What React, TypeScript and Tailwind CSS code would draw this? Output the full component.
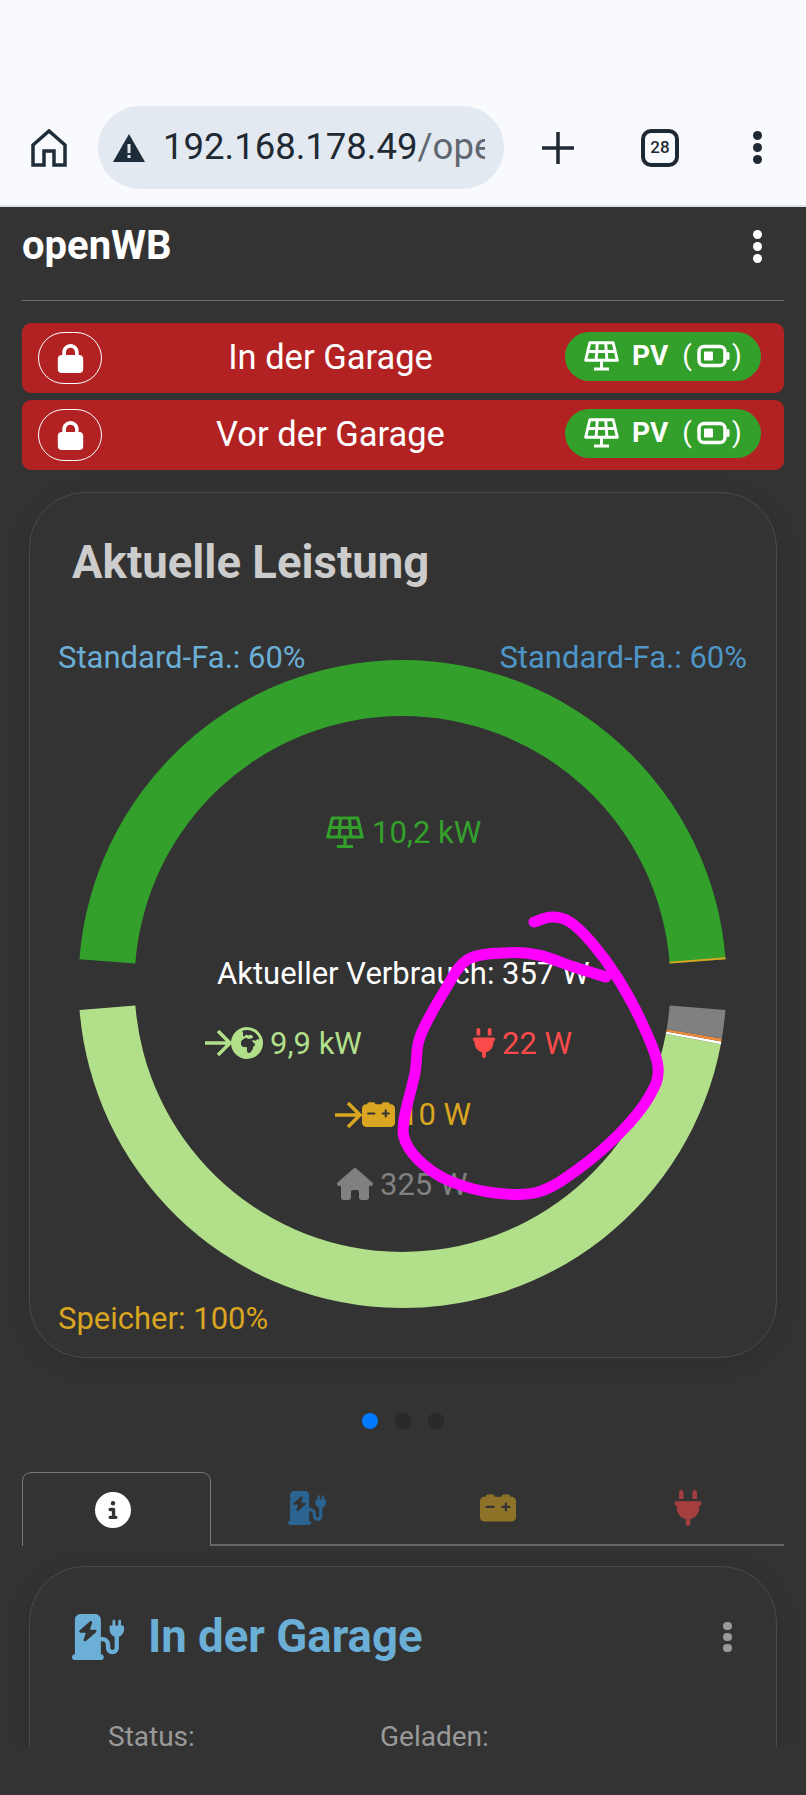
import React from "react";
import {
  FaCarBattery,
  FaChargingStation,
  FaCircleInfo,
  FaEarthAfrica,
  FaHouse,
  FaLock,
  FaPlug,
} from "react-icons/fa6";

const FONT = "font-['Roboto',sans-serif]";

function Kebab({ color = "bg-white", h = "h-[9px]", gap = "gap-[3px]" }: { color?: string; h?: string; gap?: string }) {
  return (
    <div className={`flex flex-col items-center ${gap}`}>
      <div className={`w-[9px] ${h} rounded-full ${color}`} />
      <div className={`w-[9px] ${h} rounded-full ${color}`} />
      <div className={`w-[9px] ${h} rounded-full ${color}`} />
    </div>
  );
}

function SolarPanel({ size = 36 }: { size?: number }) {
  return (
    <svg width={size} height={size * 0.86} viewBox="0 0 42 36" fill="none" stroke="currentColor" strokeWidth="3.500">
      <path d="M7 2H35L40 23H2Z" strokeLinejoin="round" />
      <path d="M4.500 12.500H37.500M16 2L14.500 23M26 2L27.500 23M21 23V33M12 33.500H30" />
    </svg>
  );
}

function BatteryOutline() {
  return (
    <svg width="33" height="24" viewBox="0 0 33 24" fill="none">
      <rect x="2" y="2.500" width="26" height="19" rx="5" stroke="currentColor" strokeWidth="3.500" />
      <rect x="7" y="7.500" width="9" height="9" rx="1" fill="currentColor" />
      <rect x="29.500" y="8" width="3" height="8" rx="1.500" fill="currentColor" />
    </svg>
  );
}

function ChargePointButton({ name }: { name: string }) {
  return (
    <div className="flex h-[70px] items-center rounded-[9px] bg-[#b22222] pl-4 pr-[23px] text-white">
      <div className="flex h-[52px] w-[64px] items-center justify-center rounded-full border border-white">
        <FaLock size={29} />
      </div>
      <div className="flex-1 pr-[6px] text-center text-[34.500px]">{name}</div>
      <div className="mb-[4px] flex h-[49px] w-[196px] items-center rounded-full bg-[#33a02c] pl-[19px] text-[28px] font-bold">
        <SolarPanel size={35} />
        <span className="ml-[13px]">PV</span>
        <span className="ml-[14px] font-normal">(</span>
        <span className="ml-[5px]"><BatteryOutline /></span>
        <span className="ml-[2px] font-normal">)</span>
      </div>
    </div>
  );
}

function polar(r: number, deg: number) {
  const a = (deg * Math.PI) / 180;
  return [401.500 + r * Math.cos(a), 984 - r * Math.sin(a)];
}

function arc(from: number, to: number, ro = 324, ri = 268) {
  const [x1, y1] = polar(ro, from);
  const [x2, y2] = polar(ro, to);
  const [x3, y3] = polar(ri, to);
  const [x4, y4] = polar(ri, from);
  const large = Math.abs(to - from) > 180 ? 1 : 0;
  const s1 = to > from ? 0 : 1;
  const s2 = to > from ? 1 : 0;
  return `M${x1} ${y1}A${ro} ${ro} 0 ${large} ${s1} ${x2} ${y2}L${x3} ${y3}A${ri} ${ri} 0 ${large} ${s2} ${x4} ${y4}Z`;
}

const scribble: [number, number][] = [
  [533, 922], [551, 917], [569, 922], [591, 943], [616, 977], [641, 1023], [657, 1067], [648, 1097],
  [619, 1133], [576, 1170], [537, 1192], [494, 1193], [451, 1182], [423, 1165], [405, 1143], [403, 1120],
  [414, 1073], [419, 1037], [444, 990], [466, 960], [501, 953], [537, 955], [573, 967], [605, 977],
];

function smooth(p: [number, number][]) {
  let d = `M${p[0][0]} ${p[0][1]}`;
  for (let i = 0; i < p.length - 1; i++) {
    const a = p[Math.max(i - 1, 0)];
    const b = p[i];
    const c = p[i + 1];
    const e = p[Math.min(i + 2, p.length - 1)];
    d += `C${b[0] + (c[0] - a[0]) / 6} ${b[1] + (c[1] - a[1]) / 6} ${c[0] - (e[0] - b[0]) / 6} ${c[1] - (e[1] - b[1]) / 6} ${c[0]} ${c[1]}`;
  }
  return d;
}

function Arrow({ x, y, color }: { x: number; y: number; color: string }) {
  return (
    <path
      d={`M${x} ${y}H${x + 24}M${x + 13} ${y - 12}L${x + 25} ${y}L${x + 13} ${y + 12}`}
      fill="none"
      stroke={color}
      strokeWidth="3.500"
    />
  );
}

function Chart() {
  return (
    <svg width="746" height="738" viewBox="29 620 746 738" className="block" fontFamily="Roboto, sans-serif" fontSize="31">
      <text x="57" y="668" fill="#6baed6">Standard-Fa.: 60%</text>
      <text x="746" y="668" fill="#4f96c8" textAnchor="end">Standard-Fa.: 60%</text>
      <text x="57" y="1329" fill="#daa520">Speicher: 100%</text>

      <path d={arc(175.6, 4.4)} fill="#33a02c" />
      <path d={arc(4.4, 4.75)} fill="#daa520" />
      <path d={arc(-175.4, -10.7)} fill="#b2df8a" />
      <path d={arc(-10.7, -10.2)} fill="#ffffff" />
      <path d={arc(-10.2, -9.7)} fill="#ee8a3a" />
      <path d={arc(-9.7, -4.6)} fill="#808080" />

      <svg x="325" y="816" width="38" height="33" viewBox="0 0 42 36" fill="none" stroke="#33a02c" strokeWidth="3.500">
        <path d="M7 2H35L40 23H2Z" strokeLinejoin="round" />
        <path d="M4.500 12.500H37.500M16 2L14.500 23M26 2L27.500 23M21 23V33M12 33.500H30" />
      </svg>
      <text x="371" y="843" fill="#33a02c">10,2 kW</text>

      <text x="216" y="984" fill="#ffffff">Aktueller Verbrauch: 357 W</text>

      <Arrow x={204} y={1043} color="#b2df8a" />
      <g className="text-[#b2df8a]"><FaEarthAfrica x={230} y={1027} size={32} /></g>
      <text x="269" y="1054" fill="#b2df8a">9,9 kW</text>

      <g className="text-[#fb4b4b]"><FaPlug x={468} y={1028} size={30} /></g>
      <text x="501" y="1054" fill="#fb4b4b">22 W</text>

      <Arrow x={334} y={1115} color="#daa520" />
      <g className="text-[#daa520]"><FaCarBattery x={361} y={1098} size={33} /></g>
      <text x="400" y="1125" fill="#daa520">10 W</text>

      <g className="text-[#808080]"><FaHouse x={336} y={1166} size={36} /></g>
      <text x="379" y="1195" fill="#808080">325 W</text>

      <path d={smooth(scribble)} fill="none" stroke="#ff00ff" strokeWidth="11" strokeLinecap="round" strokeLinejoin="round" />
    </svg>
  );
}

export default function App() {
  return (
    <div className={`h-[1795px] w-[806px] overflow-hidden bg-[#333333] ${FONT}`}>
      {/* browser toolbar */}
      <div className="flex h-[207px] items-end border-b-2 border-[#dfe3e8] bg-[#f8fafd] pb-[16px]">
        <div className="flex h-[83px] w-full items-center">
          <svg width="36" height="38" viewBox="0 0 36 38" fill="none" stroke="#1f2d3a" strokeWidth="3.500" className="ml-[31px]">
            <path d="M2 16L18 2L34 16V36H23V22H13V36H2Z" strokeLinejoin="miter" />
          </svg>
          <div className="ml-[31px] flex h-[83px] w-[406px] items-center overflow-hidden rounded-full bg-[#e3e9f1] pl-[14px]">
            <svg width="34" height="30" viewBox="0 0 34 30" className="shrink-0">
              <path d="M17 1L33 29H1Z" fill="#1f2d3a" />
              <rect x="15.500" y="11" width="3" height="9" fill="#e3e9f1" />
              <rect x="15.500" y="22" width="3" height="3" fill="#e3e9f1" />
            </svg>
            <div className="ml-[17px] w-[322px] overflow-hidden whitespace-nowrap text-[36.500px] text-[#1f2933]">
              192.168.178.49<span className="text-[#5f6770]">/openWB</span>
            </div>
          </div>
          <svg width="32" height="32" viewBox="0 0 32 32" stroke="#1f2933" strokeWidth="3.500" className="ml-[38px]">
            <path d="M16 0V32M0 16H32" />
          </svg>
          <div className="ml-[67px] flex h-[38px] w-[38px] items-center justify-center rounded-[10px] border-[4px] border-[#1f2933] text-[17px] font-medium text-[#1f2933]">
            28
          </div>
          <div className="ml-[74px]">
            <Kebab color="bg-[#1f2933]" />
          </div>
        </div>
      </div>

      {/* page, clipped by the browser's bottom bar */}
      <div className="h-[1540px] overflow-hidden px-[22px]">
        <div className="flex h-[94px] items-center justify-between border-b border-[#6a6a6a] pb-[15px]">
          <div className="text-[40px] font-bold text-white">openWB</div>
          <div className="mr-[22px]"><Kebab /></div>
        </div>

        <div className="mt-[22px] flex flex-col gap-[7px]">
          <ChargePointButton name="In der Garage" />
          <ChargePointButton name="Vor der Garage" />
        </div>

        <div className="mx-[7px] mt-[22px] h-[866px] overflow-hidden rounded-[56px] border border-[#4a4a4a] shadow-[0_4px_24px_rgba(0,0,0,0.12)]">
          <div className="flex h-[127px] items-start pl-[42px] pt-[41px] text-[45.500px] font-bold leading-[58px] text-[#cccccc]">
            Aktuelle Leistung
          </div>
          <Chart />
        </div>

        <div className="mt-[55px] flex justify-center gap-[17px]">
          <div className="h-4 w-4 rounded-full bg-[#007bff]" />
          <div className="h-4 w-4 rounded-full bg-[#292929]" />
          <div className="h-4 w-4 rounded-full bg-[#292929]" />
        </div>

        <div className="mt-[43px] flex h-[74px] border-b-2 border-[#666666]">
          <div className="mb-[-2px] flex w-[189px] items-center justify-center rounded-t-[9px] border border-b-0 border-[#777777] bg-[#333333] pr-[7px] text-white">
            <FaCircleInfo size={36} />
          </div>
          <div className="flex w-[190px] items-center justify-center pl-[2px] text-[#2b6491]">
            <FaChargingStation size={38} />
          </div>
          <div className="flex w-[191px] items-center justify-center pl-[3px] text-[#8e7228]">
            <FaCarBattery size={36} />
          </div>
          <div className="flex w-[192px] items-center justify-center text-[#a53f3f]">
            <FaPlug size={36} />
          </div>
        </div>

        <div className="mx-[7px] mt-[20px] h-[400px] rounded-[56px] border border-[#4a4a4a] shadow-[0_4px_24px_rgba(0,0,0,0.12)]">
          <div className="flex items-center pl-[42px] pr-[44px] pt-[43px]">
            <FaChargingStation size={52} className="text-[#6baed6]" />
            <span className="ml-[24px] text-[45.500px] font-bold leading-[54px] text-[#6baed6]">In der Garage</span>
            <div className="ml-auto"><Kebab color="bg-[#9a9a9a]" h="h-[8px]" /></div>
          </div>
          <div className="mt-[52px] flex pl-[78px] text-[28px] text-[#999999]">
            <span className="w-[272px]">Status:</span>
            <span>Geladen:</span>
          </div>
        </div>
      </div>
    </div>
  );
}
